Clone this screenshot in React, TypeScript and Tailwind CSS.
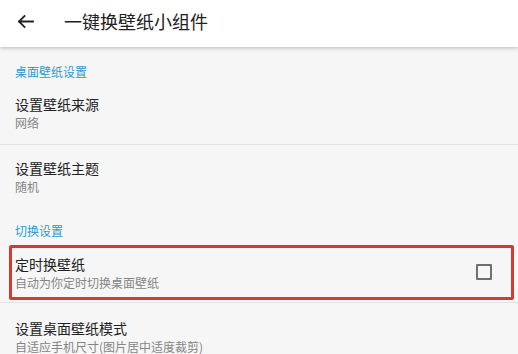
const font = { fontFamily: '"Noto Sans CJK SC", "Noto Sans", sans-serif' };

function Category({ label, className }: { label: string; className: string }) {
  return (
    <div className={`px-[15px] text-[12px] leading-4 text-[#2b9ad3] ${className}`}>{label}</div>
  );
}

function Item({
  title,
  summary,
  className = "",
  children,
}: {
  title: string;
  summary: string;
  className?: string;
  children?: React.ReactNode;
}) {
  return (
    <div className={`relative flex items-center px-[15px] ${className}`}>
      <div className="flex-1">
        <div className="text-[14px] leading-5 text-[#212121]">{title}</div>
        <div className="text-[12px] leading-[18px] text-[#858585]">{summary}</div>
      </div>
      {children}
    </div>
  );
}

export default function App() {
  return (
    <div className="w-[518px] h-[354px] overflow-hidden bg-[#f6f6f6]" style={font}>
      <header className="relative z-10 flex items-center h-[47px] bg-white shadow-[0_1px_4px_rgba(0,0,0,0.25)]">
        <svg className="ml-[16px] mt-[-6px]" width="20" height="16" viewBox="0 0 20 16" fill="none">
          <path d="M3 8.5H17M8.5 3L3 8.5L8.5 14" stroke="#222" strokeWidth="1.8" strokeLinecap="square" />
        </svg>
        <h1 className="ml-[28px] mt-[-6px] text-[18px] leading-6 text-[#212121]">一键换壁纸小组件</h1>
      </header>

      <Category label="桌面壁纸设置" className="pt-[17px]" />
      <Item title="设置壁纸来源" summary="网络" className="pt-[14px] pb-[12px] border-b border-[#e2e2e2]" />
      <Item title="设置壁纸主题" summary="随机" className="pt-[13px] pb-[13px]" />
      <Category label="切换设置" className="pt-[14px]" />
      <Item title="定时换壁纸" summary="自动为你定时切换桌面壁纸" className="pt-[15px] pb-[10px] border-b border-[#e2e2e2]">
        <div className="mr-[11px] mt-[-2px] w-[16px] h-[16px] border-2 border-[#6f6f6f] rounded-[1px]" />
        <div className="absolute left-[9px] right-[4px] top-[6px] bottom-[2px] border-[3px] border-[#d23a34] rounded-[2px]" />
      </Item>
      <Item title="设置桌面壁纸模式" summary="自适应手机尺寸(图片居中适度裁剪)" className="pt-[15px]" />
    </div>
  );
}
